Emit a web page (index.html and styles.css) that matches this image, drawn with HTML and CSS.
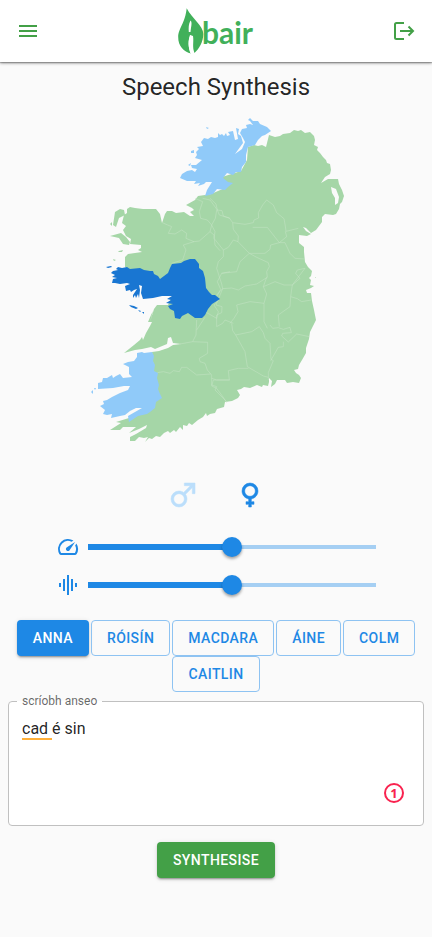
FILE: index.html
```html
<!DOCTYPE html>
<html lang="en">
<head>
<meta charset="utf-8">
<meta name="viewport" content="width=device-width, initial-scale=1">
<title>Abair – Speech Synthesis</title>
<link rel="stylesheet" href="styles.css">
</head>
<body>
<header class="bar">
  <button class="icon-button" type="button" aria-label="Menu">
    <svg viewBox="0 0 24 24"><path d="M3 6h18v2H3zM3 11h18v2H3zM3 16h18v2H3z"/></svg>
  </button>
  <a class="logo" href="#" aria-label="Abair">
    <svg viewBox="176 6 80 50">
      <path d="M186.700 8.300C189.500 14 194 18 197 22C200.500 26 203.300 30 203.300 34C203.300 42 199 49 194.500 53C192 47 194 42 193 36L190 35C188 41 188 47 191 53.500C184 52 178 46 178.200 37C178.400 28 185 24 186.700 8.300Z"/>
      <path class="logo-vein" d="M190.500 20.500C192.500 22 191 27 190.500 32L188.800 32C188.500 28 188.500 24 190.500 20.500ZM190.500 35C193.500 37 191.500 46 194 53.500L190.500 53.500C188 47 188 40 190.500 35Z"/>
      <text class="logo-text" x="202" y="44">bair</text>
    </svg>
  </a>
  <button class="icon-button" type="button" aria-label="Log out">
    <svg viewBox="0 0 24 24"><path class="line" d="M12 4H4.500Q3 4 3 5.500V18.500Q3 20 4.500 20H12M8 12H21M16.500 7.500L21 12L16.500 16.500"/></svg>
  </button>
</header>

<main>
  <h1>Speech Synthesis</h1>

  <svg class="map" viewBox="80 110 272 340" role="img" aria-label="Map of Ireland">
    <path class="land" fill-rule="evenodd" d="M205 195L211 194L225 188L222 177L241 171L247 160L248 147L254 145L258 146L262 145L266 147L269 135L275 137L280 136L283 134L290 133L294 130L298 131L301 130L305 133L310 132L314 136L315 140L314 145L318 147L317 150L320 153L323 157L326 160L327 163L330 164L331 170L330 174L325 177L321 183L328 179L333 179L338 179L339 184L342 190L344 196L342 202L340 204L339 209L336 214L333 215L325 214L322 217L322 222L316 230L311 233L306 228L303 227L306 231L311 234L307 236L299 235L299 243L304 247L304 252L305 262L308 267L312 271L311 276L309 278L311 280L310 285L314 286L311 288L306 290L307 293L311 293L312 301L314 310L316 320L313 326L310 332L309 339L306 348L306 353L302 360L299 365L298 369L294 370L296 373L299 375L301 378L299 383L293 382L287 383L285 380L277 380L275 384L271 387L272 381L269 378L269 382L268 386L263 385L262 387L257 385L250 388L244 387L241 389L237 390L240 395L238 398L232 401L225 402L224 407L217 409L215 413L210 414L207 416L206 413L203 417L198 420L192 425L189 423L187 426L183 425L183 430L180 427L176 432L174 430L170 433L168 431L164 433L160 437L156 436L152 439L149 438L145 442L148 437L144 438L139 437L135 441L130 441L130 437L136 434L146 428L147 425L139 429L129 433L136 427L123 427L120 430L110 430L121 423L116 422L129 418L148 408L156 390L152 352L159 351L168 348L173 345L181 344L173 343L171 337L168 338L167 344L155 349L151 347L142 349L135 350L124 353L134 345L140 340L142 337L143 340L146 333L150 326L152 322L148 322L151 315L153 311L150 322L154 309L157 305L168 305L175 290L140 275L125 267L125 257L128 254L142 252L138 250L141 248L141 245L130 244L131 239L126 236L123 230L126 226L122 223L124 215L127 213L127 209L130 207L135 208L143 209L156 209L160 214L162 223L165 214L167 211L172 211L176 213L184 212L187 214L190 216L194 216L190 212L194 210L192 208L186 205L195 200L198 196ZM331 187L336 189L339 197L338 203L335 205L335 198L332 193Z"/>
    <path class="land" d="M115 212L120 209L124 210L125 215L119 218L116 227L113 225ZM110 236L121 233L126 237L130 242L129 245L123 244L119 238ZM119 251L123 250L122 252L118 252ZM113 259L116 260L114 261ZM110 224L112 222L112 226ZM315 277L316 277L316 278Z"/>
    <g class="borders" transform="translate(210 190) scale(.3333)">
      <path d="M0 25L18 42L22 60L36 62L40 78L58 84L68 98L105 103L130 98L132 90L146 84L145 68L158 45L170 30L190 45L200 68L222 86L226 108L228 124L265 115"/>
      <path d="M20 60L16 85L5 105L15 125L12 145L40 180L55 172L70 150L84 155L85 138L70 118L68 98M128 112L172 112L208 158L230 140L226 124M40 180L40 200L25 215L20 235L35 282L38 296M118 190L90 215L80 245L35 250M84 155L118 190L165 190L180 178L182 165L208 158L225 158L240 190L255 205L283 207M118 190L140 202L175 218L178 230L170 245L172 262L140 282L105 288L85 300L65 294L38 296L20 315"/>
      <path d="M170 262L160 290L172 285L195 275L222 285L247 285L285 235L262 240L257 250L270 265L247 285L242 320L262 326L275 335L304 330M160 290L170 312L162 340L120 335L80 345L84 365L72 385L60 400M162 340L162 395L172 415M242 320L240 350L205 375L208 410M38 296L18 345L36 350L35 368L20 375L20 410L38 400L45 390L70 400"/>
    </g>
    <g class="borders" transform="translate(210 300) scale(.3333)">
      <path d="M65 70L68 92L77 105L125 95L148 80L160 98L165 115L180 130L183 178L190 182L175 218L175 240M180 75L188 85L205 83L220 88L240 82L244 98L218 100L215 108L235 126L260 102L298 110M220 125L220 140L205 142L182 182M77 105L105 155L112 200L160 228L175 232M115 205L85 205L55 212L58 240L10 240L5 258L20 265L42 295L50 308"/>
    </g>
    <g class="borders" transform="translate(80 190) scale(.3333)">
      <path d="M247 98L263 105L275 110L265 130L285 132L305 120L320 130L318 145L342 155L358 153L390 125L395 105L382 90L362 85L358 65L368 35L345 25M368 25L390 30L412 60L418 75L450 85M342 155L310 165L318 180L308 210L275 220M390 125L402 135L405 165L420 182M450 245L425 250L412 275L422 298L410 320M418 327L402 345L415 365L410 385L375 365M375 382L350 420"/>
    </g>
    <g class="borders" transform="translate(80 310) scale(.3333)">
      <path d="M350 30L348 75L338 95L300 102M338 95L383 97L383 130L358 145L360 155L375 160L382 180L395 195L395 225L410 230L405 240L440 275M232 188L250 185L270 190L280 182L298 185L305 172L320 172L350 195L392 192M395 205L410 210L450 210"/>
    </g>
    <path class="region" d="M250 118L253 121L258 121L260 124L267 127L271 131L265 135L262 136L258 140L255 145L248 147L246 155L246 162L242 167L241 172L236 172L233 175L227 173L223 178L228 182L233 183L228 187L225 190L217 189L213 194L205 196L207 190L212 182L206 182L204 184L198 186L200 183L194 184L196 181L190 181L187 181L180 178L182 174L187 171L192 170L195 172L197 169L192 168L191 165L196 165L202 160L195 158L197 155L196 152L199 149L197 147L203 146L201 142L204 138L208 139L211 137L215 138L218 137L218 133L220 135L222 134L224 136L226 133L227 136L230 135L228 132L233 131L235 140L238 139L236 128L239 129L238 134L241 136L243 143L235 154L242 149L245 142L243 138L240 133L242 129L247 128L246 125L250 124L253 125L250 121L248 120ZM191 151L194 150L194 153L191 153ZM206 127L209 128L207 129ZM188 165L191 163L190 166Z"/>
    <path class="region" d="M137 353L142 352L144 353L152 352L154 356L153 361L155 365L154 371L158 373L157 378L159 385L158 389L160 394L162 398L156 402L155 408L150 412L147 414L138 416L129 422L128 416L142 408L136 408L130 411L125 415L120 416L111 418L112 414L107 415L103 414L105 410L100 406L104 404L103 401L107 400L112 397L120 393L128 390L130 386L124 386L113 388L98 389L98 383L102 382L103 378L107 378L112 375L113 378L116 376L120 374L123 378L132 377L129 374L129 367L123 364L128 362L134 361L137 357ZM91 392L93 390L93 394ZM94 388L96 388L95 390Z"/>
    <path class="region region-on" d="M118 267L122 268L127 267L130 269L140 268L144 270L150 271L153 271L154 274L158 276L160 279L164 276L168 273L170 268L172 264L181 263L184 261L190 259L195 259L199 264L199 268L203 271L205 278L206 288L209 292L212 295L215 295L220 299L212 304L208 309L205 315L202 318L195 318L188 313L182 316L180 319L175 318L174 311L170 309L168 306L173 304L166 303L171 300L167 299L172 296L162 296L153 298L143 299L142 296L141 293L142 286L139 285L140 290L139 298L138 294L136 298L135 295L133 298L133 295L137 289L134 290L131 292L130 290L126 291L125 286L130 284L127 283L120 284L115 283L112 283L113 279L117 278L112 277L115 275L111 273L113 271L118 270L116 269Z"/>
    <path class="region region-on" d="M129 305L134 306L138 308L136 309L131 307ZM138 310L141 311L140 312ZM142 312L144 312L144 314ZM106 267L111 266L112 267L108 268Z"/>
  </svg>

  <div class="genders">
    <button class="gender gender-off" type="button" aria-label="Male">
      <svg viewBox="0 0 24 24"><path d="M9,9C10.290,9 11.500,9.410 12.470,10.110L17.580,5H13V3H21V11H19V6.410L13.890,11.500C14.590,12.500 15,13.700 15,15A6,6 0 0,1 9,21A6,6 0 0,1 3,15A6,6 0 0,1 9,9M9,11A4,4 0 0,0 5,15A4,4 0 0,0 9,19A4,4 0 0,0 13,15A4,4 0 0,0 9,11Z"/></svg>
    </button>
    <button class="gender" type="button" aria-label="Female">
      <svg viewBox="0 0 24 24"><path d="M12,3A6,6 0 0,1 18,9C18,11.970 15.840,14.440 13,14.920V17H15V19H13V21H11V19H9V17H11V14.920C8.160,14.440 6,11.970 6,9A6,6 0 0,1 12,3M12,5A4,4 0 0,0 8,9A4,4 0 0,0 12,13A4,4 0 0,0 16,9A4,4 0 0,0 12,5Z"/></svg>
    </button>
  </div>

  <div class="sliders">
    <div class="slider">
      <label for="speed" aria-label="Speed"><svg viewBox="0 0 24 24"><path d="m20.380 8.570-1.230 1.850a8 8 0 0 1-.22 7.580H5.070A8 8 0 0 1 15.580 6.850l1.850-1.230A10 10 0 0 0 3.350 19a2 2 0 0 0 1.720 1h13.850a2 2 0 0 0 1.740-1 10 10 0 0 0-.27-10.440zm-9.790 6.840a2 2 0 0 0 2.830 0l5.660-8.490-8.490 5.660a2 2 0 0 0 0 2.830z"/></svg></label>
      <input id="speed" type="range" min="0" max="100" value="50">
    </div>
    <div class="slider">
      <label for="pitch" aria-label="Pitch"><svg viewBox="0 0 24 24"><path d="M7 18h2V6H7v12zm4 4h2V2h-2v20zm-8-8h2v-4H3v4zm12 4h2V6h-2v12zm4-8v4h2v-4h-2z"/></svg></label>
      <input id="pitch" type="range" min="0" max="100" value="50">
    </div>
  </div>

  <div class="voices">
    <button class="button button-on" type="button">ANNA</button>
    <button class="button" type="button">RÓISÍN</button>
    <button class="button" type="button">MACDARA</button>
    <button class="button" type="button">ÁINE</button>
    <button class="button" type="button">COLM</button>
    <button class="button" type="button">CAITLIN</button>
  </div>

  <form class="form">
    <fieldset class="field">
      <legend><label for="text">scríobh anseo</label></legend>
      <div class="editor">
        <div class="marks" aria-hidden="true"><span class="mark">cad </span></div>
        <textarea id="text" rows="4" spellcheck="false">cad é sin</textarea>
        <button class="issues" type="button" aria-label="1 issue">1</button>
      </div>
    </fieldset>
    <button class="button button-submit" type="button">SYNTHESISE</button>
  </form>
</main>
</body>
</html>
```
FILE: styles.css
```css
* {
  box-sizing: border-box;
}

body {
  margin: 0;
  background: #fafafa;
  color: rgba(0, 0, 0, 0.87);
  font-family: Roboto, "Liberation Sans", sans-serif;
  font-size: 16px;
}

button {
  border: 0;
  background: none;
  font-family: inherit;
  cursor: pointer;
}

svg {
  display: block;
  fill: currentColor;
}

.bar {
  display: flex;
  align-items: center;
  justify-content: space-between;
  height: 62px;
  padding: 0 16px;
  background: #fff;
  color: #43a047;
  box-shadow: 0 1px 3px rgba(0, 0, 0, 0.45), 0 1px 1px rgba(0, 0, 0, 0.2);
}

.icon-button {
  padding: 0;
  color: inherit;
}

.icon-button svg {
  width: 24px;
  height: 24px;
}

.line {
  fill: none;
  stroke: currentColor;
  stroke-width: 2;
}

.logo {
  color: #41b05a;
}

.logo svg {
  width: 80px;
  height: 50px;
}

.logo-vein {
  fill: #fff;
}

.logo-text {
  font-family: Lato, "Open Sans", sans-serif;
  font-size: 30px;
  font-weight: 700;
}

main {
  display: flex;
  flex-direction: column;
  align-items: center;
  padding: 9px 8px;
}

h1 {
  margin: 0 0 7px;
  font-size: 24px;
  font-weight: 400;
  line-height: 32px;
}

.map {
  width: 272px;
  max-width: 100%;
}

.land {
  fill: #a5d6a7;
}

.borders {
  fill: none;
  stroke: #c8e6c9;
  stroke-opacity: 0.7;
  stroke-width: 2;
  stroke-linejoin: round;
}

.region {
  fill: #90caf9;
}

.region-on {
  fill: #1976d2;
}

.genders {
  display: flex;
  gap: 35px;
  margin: 29px 0 24px;
}

.gender {
  padding: 0;
  color: #1e88e5;
}

.gender svg {
  width: 32px;
  height: 32px;
  stroke: currentColor;
  stroke-width: 0.4;
}

.gender-off {
  color: #bbdefb;
}

.sliders {
  display: grid;
  gap: 14px;
  width: 77%;
  margin-bottom: 23px;
}

.slider {
  display: flex;
  align-items: center;
  gap: 8px;
  color: #1e88e5;
}

.slider svg {
  width: 24px;
  height: 24px;
}

.slider input {
  flex: 1;
  min-width: 0;
  height: 20px;
  margin: 0;
  appearance: none;
  border-radius: 3px;
  background:
    linear-gradient(#1e88e5, #1e88e5) left center / 50% 6px no-repeat,
    linear-gradient(#a5cff3, #a5cff3) center / 100% 4px no-repeat;
}

.slider input::-webkit-slider-thumb {
  width: 20px;
  height: 20px;
  appearance: none;
  border-radius: 50%;
  background: #1e88e5;
  box-shadow: 0 2px 3px rgba(0, 0, 0, 0.35);
}

.voices {
  display: flex;
  flex-wrap: wrap;
  justify-content: center;
  column-gap: 2px;
}

.button {
  padding: 5px 15px;
  border: 1px solid #8ec3f2;
  border-radius: 4px;
  color: #1e88e5;
  font-size: 14px;
  font-weight: 500;
  line-height: 24px;
  letter-spacing: 0.03em;
}

.button-on,
.button-submit {
  border-color: transparent;
  background: #1e88e5 border-box;
  color: #fff;
  box-shadow: 0 3px 1px -2px rgba(0, 0, 0, 0.2), 0 2px 2px rgba(0, 0, 0, 0.14), 0 1px 5px rgba(0, 0, 0, 0.12);
}

.button-submit {
  background-color: #43a047;
}

.form {
  display: flex;
  flex-direction: column;
  align-items: center;
  gap: 16px;
  align-self: stretch;
  margin-top: 1px;
}

.field {
  align-self: stretch;
  min-width: 0;
  margin: 0;
  padding: 0 8px 12px;
  border: 1px solid #c0c0c0;
  border-radius: 4px;
  background: #fff;
}

.field legend {
  padding: 0 5px;
  color: rgba(0, 0, 0, 0.6);
  font-size: 12px;
  line-height: 16px;
}

.editor {
  position: relative;
  margin: 8px 5px 0;
}

.editor textarea,
.marks {
  width: 100%;
  padding: 0;
  border: 0;
  background: none;
  color: inherit;
  font: 16px/24px Roboto, "Liberation Sans", sans-serif;
}

.editor textarea {
  display: block;
  resize: none;
  outline: 0;
}

.marks {
  position: absolute;
  inset: 0;
  color: transparent;
  white-space: pre-wrap;
  pointer-events: none;
}

.mark {
  border-bottom: 2px solid #ffb03a;
}

.issues {
  position: absolute;
  right: 6px;
  bottom: 10px;
  width: 20px;
  height: 20px;
  padding: 0;
  border: 2px solid #f9234f;
  border-radius: 50%;
  color: #f9234f;
  font: 700 13px/16px "Noto Sans", sans-serif;
}
```
